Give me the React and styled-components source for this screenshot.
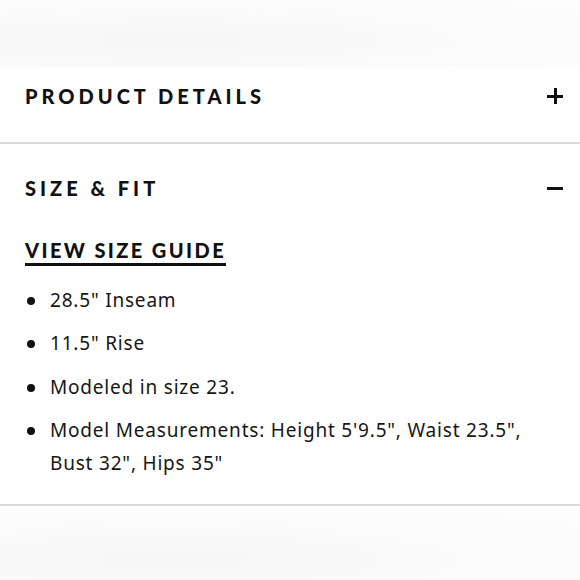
import React from "react";
import styled, { createGlobalStyle } from "styled-components";

const Global = createGlobalStyle`
  html, body { margin: 0; padding: 0; background: #ffffff; }
  body { font-family: "Noto Sans", "Liberation Sans", sans-serif; color: #111; }
  * { box-sizing: border-box; }
`;

const Page = styled.div`
  width: 580px;
  height: 580px;
  display: flex;
  flex-direction: column;
  overflow: hidden;
`;

const Band = styled.div`
  height: ${(p) => p.$h}px;
  flex-shrink: 0;
  background: radial-gradient(ellipse at 30% 60%, #f6f6f6 0%, #fafafa 45%, #fdfdfd 100%);
`;

const Gap = styled.div`
  height: ${(p) => p.$h}px;
  flex-shrink: 0;
  background: #fff;
`;

const Section = styled.section`
  border-bottom: 2px solid #d9d9d9;
  padding: 0 17px 0 25px;
`;

const Header = styled.div`
  padding: ${(p) => p.$pt}px 0 ${(p) => p.$pb}px;
  display: flex;
  align-items: center;
  justify-content: space-between;
`;

const Title = styled.h2`
  margin: 0;
  font-family: "Lato", sans-serif;
  font-weight: 900;
  font-size: 20px;
  line-height: 24px;
  letter-spacing: 4px;
  color: #111;
  text-transform: uppercase;
`;

const Toggle = styled.span`
  width: 16px;
  height: 16px;
  position: relative;
  display: inline-block;
  &::before, &::after {
    content: "";
    position: absolute;
    background: #111;
  }
  &::before {
    left: 0; right: 0; top: 7px; height: 2.5px;
  }
  &::after {
    display: ${(p) => (p.$open ? "none" : "block")};
    top: 0; bottom: 0; left: 7px; width: 2.5px;
  }
`;

const Body = styled.div`
  padding: 38px 0 24px 0;
`;

const GuideLink = styled.a`
  display: inline-block;
  font-family: "Lato", sans-serif;
  font-weight: 900;
  font-size: 20px;
  line-height: 24px;
  letter-spacing: 2.4px;
  color: #111;
  text-decoration: none;
  text-transform: uppercase;
  border-bottom: 3px solid #111;
  padding-bottom: 1px;
  margin-right: -2px;
`;

const List = styled.ul`
  margin: 17.5px 0 0 0;
  padding: 0;
  list-style: none;
`;

const Item = styled.li`
  position: relative;
  padding-left: 25px;
  font-family: "Noto Sans", sans-serif;
  font-size: 19px;
  line-height: 33px;
  letter-spacing: 0.8px;
  color: #161616;
  margin-bottom: 10.5px;
  &:last-child { margin-bottom: 0; }
  &::before {
    content: "";
    position: absolute;
    left: 2px;
    top: 13px;
    width: 8px;
    height: 8px;
    border-radius: 50%;
    background: #111;
  }
`;

const items = [
  '28.5" Inseam',
  '11.5" Rise',
  "Modeled in size 23.",
  'Model Measurements: Height 5\'9.5", Waist 23.5", Bust 32", Hips 35"',
];

export default function App() {
  return (
    <Page>
      <Global />
      <Band $h={67} />
      <Section>
        <Header $pt={17} $pb={34}>
          <Title>Product Details</Title>
          <Toggle />
        </Header>
      </Section>
      <Section>
        <Header $pt={32} $pb={0}>
          <Title>Size &amp; Fit</Title>
          <Toggle $open />
        </Header>
        <Body>
          <GuideLink href="#">View Size Guide</GuideLink>
          <List>
            {items.map((t) => (
              <Item key={t}>{t}</Item>
            ))}
          </List>
        </Body>
      </Section>
      <Gap $h={6} />
      <Band $h={80} />
    </Page>
  );
}
